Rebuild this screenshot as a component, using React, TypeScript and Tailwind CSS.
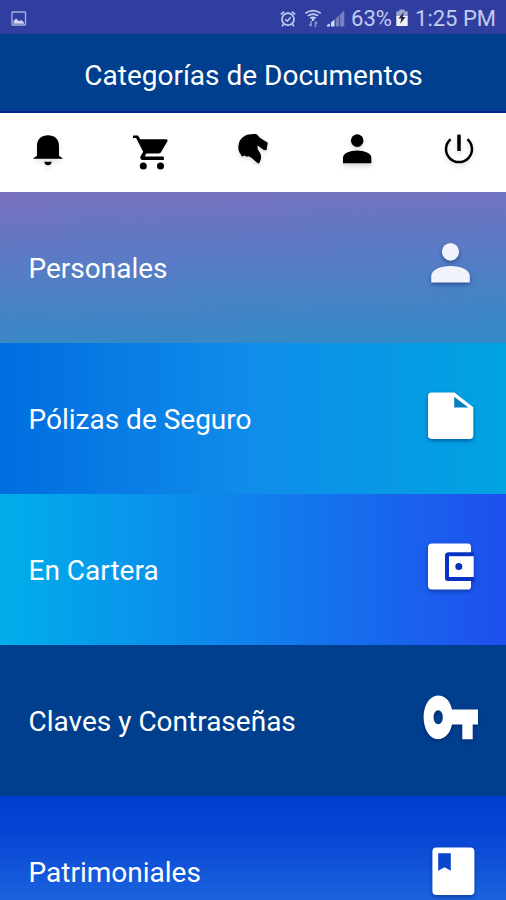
import React from 'react';

const BellIcon = () => (
  <svg viewBox="0 0 48 48" className="w-12 h-12 drop-shadow-[0_3px_2px_rgba(0,0,0,0.1)]">
    <path d="M13 26V20C13 13 17.5 9.3 24 9.3S35 13 35 20V29.2C35 30.6 38.8 31.4 38.8 32.8H9.2C9.2 31.4 13 30.6 13 29.2Z" />
    <path d="M20.3 35.7H27.7C27.7 38 26 39.2 24 39.2S20.3 38 20.3 35.7Z" />
  </svg>
);

const CartIcon = () => (
  <svg viewBox="0 0 48 48" className="w-12 h-12">
    <path d="M6 9.4H11L13.3 13.2H39.2C40.5 13.2 41 14.2 40.4 15.2L34.3 25.8C33.7 26.9 32.9 27.5 31.5 27.5H19.3L17.8 30.6H36.8V34H16.2C13.6 34 12.6 32 13.7 30L16.2 25.7L9.1 12H6Z" />
    <circle cx="16.3" cy="40" r="3.5" />
    <circle cx="33.5" cy="40" r="3.5" />
  </svg>
);

const HorseIcon = () => (
  <svg viewBox="0 0 48 48" className="w-12 h-12 drop-shadow-[0_2px_2px_rgba(0,0,0,0.15)]">
    <path d="M13.3 11.8C16 9.2 19 8.2 22.5 8.3C25 7.9 27.5 8 28.6 9L30.5 11.5L38.8 16.8L37.5 24.3L34.8 24L28.8 19.5C27.9 22 29 24 30.6 26.3C32.3 29 32.4 31.5 31.6 33.8L30 37.7L27.8 36.5C25 34.5 23.2 31.2 19.7 30.2L17.3 30.8L16 29.6L12.8 30.5L11.7 28.2C9.6 25.5 8.9 22 9.6 19.2C9.8 16 11.2 13.6 13.3 11.8Z" />
  </svg>
);

const UserIcon = () => (
  <svg viewBox="0 0 48 48" className="w-12 h-12 drop-shadow-[0_3px_2px_rgba(0,0,0,0.15)]">
    <circle cx="25.2" cy="14.6" r="6.3" />
    <path d="M11 37.3V31.5C11 27.5 17.5 24.6 25.1 24.6S39.3 27.5 39.3 31.5V37.3Z" />
  </svg>
);

const PowerIcon = () => (
  <svg viewBox="0 0 48 48" fill="none" stroke="#000" className="w-12 h-12 drop-shadow-[0_3px_2px_rgba(0,0,0,0.12)]">
    <path strokeWidth="2.5" d="M16.6 13.2A13 13 0 1 0 33.4 13.2" />
    <path strokeWidth="3.5" d="M25 8.6V25" />
  </svg>
);

const iconClass = 'w-[60px] h-[65px] shrink-0 fill-white drop-shadow-[0_2px_2px_rgba(0,20,90,0.45)]';

const categories = [
  {
    name: 'Personales',
    bg: 'bg-[linear-gradient(178deg,#7870be_0%,#5c7ac5_40%,#328bc6_100%)]',
    icon: (
      <svg viewBox="0 0 60 65" className={iconClass}>
        <g fill="#f0f3fb">
          <ellipse cx="30.5" cy="16.8" rx="8.6" ry="8.9" />
          <path d="M11.2 47.6V41C11.2 35 20 31 30.5 31S49.8 35 49.8 41V47.6Z" />
        </g>
      </svg>
    ),
  },
  {
    name: 'Pólizas de Seguro',
    bg: 'bg-[linear-gradient(90deg,#006ddf_0%,#108bea_48%,#00a4e1_100%)]',
    icon: (
      <svg viewBox="0 0 60 65" className={iconClass}>
        <path d="M11.5 6.6H34.5L53.3 21.3V49.6Q53.3 52.9 50 52.9H11.5Q8 52.9 8 49.6V10.1Q8 6.6 11.5 6.6Z" />
        <path fill="#087fbd" d="M34.2 10.8V21.5H48.4Z" />
      </svg>
    ),
  },
  {
    name: 'En Cartera',
    bg: 'bg-[linear-gradient(90deg,#00aeea_0%,#0f82ec_48%,#1f4fee_100%)]',
    icon: (
      <svg viewBox="0 0 60 65" className={iconClass}>
        <path d="M12 6.6H47.5Q51 6.6 51 10.1V15.5H28.5Q25 15.5 25 19V40.4Q25 43.9 28.5 43.9H51V49.2Q51 52.6 47.5 52.6H12Q8 52.6 8 48.6V10.6Q8 6.6 12 6.6Z" />
        <path fill="#0832c4" d="M28.5 15.5H54V43.9H28.5Q25 43.9 25 40.4V19Q25 15.5 28.5 15.5Z" />
        <path d="M29 19.2H53.7V40H29Z" />
        <circle cx="38.8" cy="29.6" r="3.5" fill="#0832b4" />
      </svg>
    ),
  },
  {
    name: 'Claves y Contraseñas',
    bg: 'bg-[#003f8e]',
    icon: (
      <svg viewBox="0 0 60 65" className={iconClass}>
        <path
          fillRule="evenodd"
          d="M18 7.5C25 7.5 30.2 13 32 21.5H58V36.5H52.7V51.2H42.3V36.5H32C30.2 45 25 51.2 18 51.2C9.8 51.2 3.6 41.5 3.6 29.3S9.8 7.5 18 7.5ZM18.2 22.2C15.6 22.2 13.6 25.2 13.6 29.2S15.6 36.2 18.2 36.2S22.8 33.2 22.8 29.2S20.8 22.2 18.2 22.2Z"
        />
      </svg>
    ),
  },
  {
    name: 'Patrimoniales',
    bg: 'bg-[linear-gradient(180deg,#003dcf_0%,#0845d4_25%,#2878e4_100%)]',
    icon: (
      <svg viewBox="0 0 60 65" className={iconClass}>
        <rect x="12.4" y="8.5" width="42" height="47.4" rx="4" />
        <path fill="#0a45cc" d="M18.2 14.2H30.8V31.8L24.5 28.2L18.2 31.8Z" />
      </svg>
    ),
  },
];

const StatusBar = () => (
  <div className="h-[34px] shrink-0 bg-[#303f9f] flex items-center justify-between pl-[11px] pr-[10px] pt-[3px] text-[#c3caf0]">
    <svg viewBox="0 0 16 16" className="w-4 h-4">
      <rect x="1" y="1" width="13.5" height="13" rx="0.5" fill="none" stroke="#a9b0dc" strokeWidth="1.3" />
      <path d="M2.5 12.8V10L5 7.5L8 10.3L10 9L13 11.3V12.8Z" fill="#d0d5f2" />
    </svg>
    <div className="flex items-center">
      <svg viewBox="0 0 18 20" fill="none" stroke="#c3caf0" className="w-[18px] h-5 mr-[7px] -ml-px">
        <circle cx="8" cy="10.2" r="6" strokeWidth="1.7" />
        <path strokeWidth="1.6" d="M.8 5.3L4 2.6M15.2 5.3L12 2.6M3.6 15L2 17.4M12.4 15L14 17.4M5.3 10.3L7.3 12.2L10.7 8.3" />
      </svg>
      <svg viewBox="0 0 18 20" fill="none" stroke="#c3caf0" strokeWidth="1.7" className="w-[18px] h-5 mr-1">
        <path d="M.3 4.2Q8 -.8 15.7 4.2M2.8 6.9Q8 3.5 13.2 6.9M5.2 9.3Q8 7.4 10.8 9.3" />
        <path d="M8 9V12" strokeWidth="2.2" />
        <path stroke="#8790cb" d="M6 12V17.2M4.3 15.4L6 17.2M10.5 18V12.7M12.2 14.5L10.5 12.7" />
      </svg>
      <svg viewBox="0 0 20 20" className="w-5 h-5 mr-[5px]">
        <path fill="#d2d7f2" d="M0 16L3 14.5V17.5H0ZM4 13.5L7.5 10.5V17.5H4Z" />
        <path fill="#7680c2" d="M8.7 9.6L12 6.6V17.5H8.7ZM12.8 5.8L17.3 1.5V17.5H12.8Z" />
      </svg>
      <span className="text-[22px] leading-none w-[40px] -ml-px whitespace-nowrap">63%</span>
      <svg viewBox="0 0 14 20" className="w-3.5 h-5 ml-[4px] mr-[6px]">
        <path fill="#9da4cf" d="M4.4 .5H9.6V2.3H12.7V8H1.3V2.3H4.4Z" />
        <path fill="#f1f1f5" d="M1.3 7H12.7V17H1.3Z" />
        <path fill="#25264a" d="M8.7 3L3.5 9.5H6.3L5.2 14.8L10.6 8.1H7.8Z" />
      </svg>
      <span className="text-[22px] leading-none whitespace-nowrap">1:25 PM</span>
    </div>
  </div>
);

const App: React.FC = () => {
  return (
    <div className="w-full h-[900px] overflow-hidden flex flex-col bg-white font-[Roboto,sans-serif] text-white">
      <StatusBar />

      <header className="h-[79px] shrink-0 bg-[#003f8e] border-b-2 border-[#00208c] flex items-center justify-center pt-[7px] pl-px">
        <h1 className="text-[28px] leading-none">Categorías de Documentos</h1>
      </header>

      {/* Toolbar */}
      <nav className="h-[79px] shrink-0 bg-white flex justify-between items-start px-6 pt-[13px]">
        <BellIcon />
        <CartIcon />
        <HorseIcon />
        <UserIcon />
        <PowerIcon />
      </nav>

      {/* Category list */}
      <main>
        {categories.map((item) => (
          <div key={item.name} className={`h-[151px] flex items-center justify-between pl-[28.5px] pr-[26px] ${item.bg}`}>
            <span className="text-[28px] leading-none pt-[3px]">{item.name}</span>
            {item.icon}
          </div>
        ))}
      </main>
    </div>
  );
};

export default App;
